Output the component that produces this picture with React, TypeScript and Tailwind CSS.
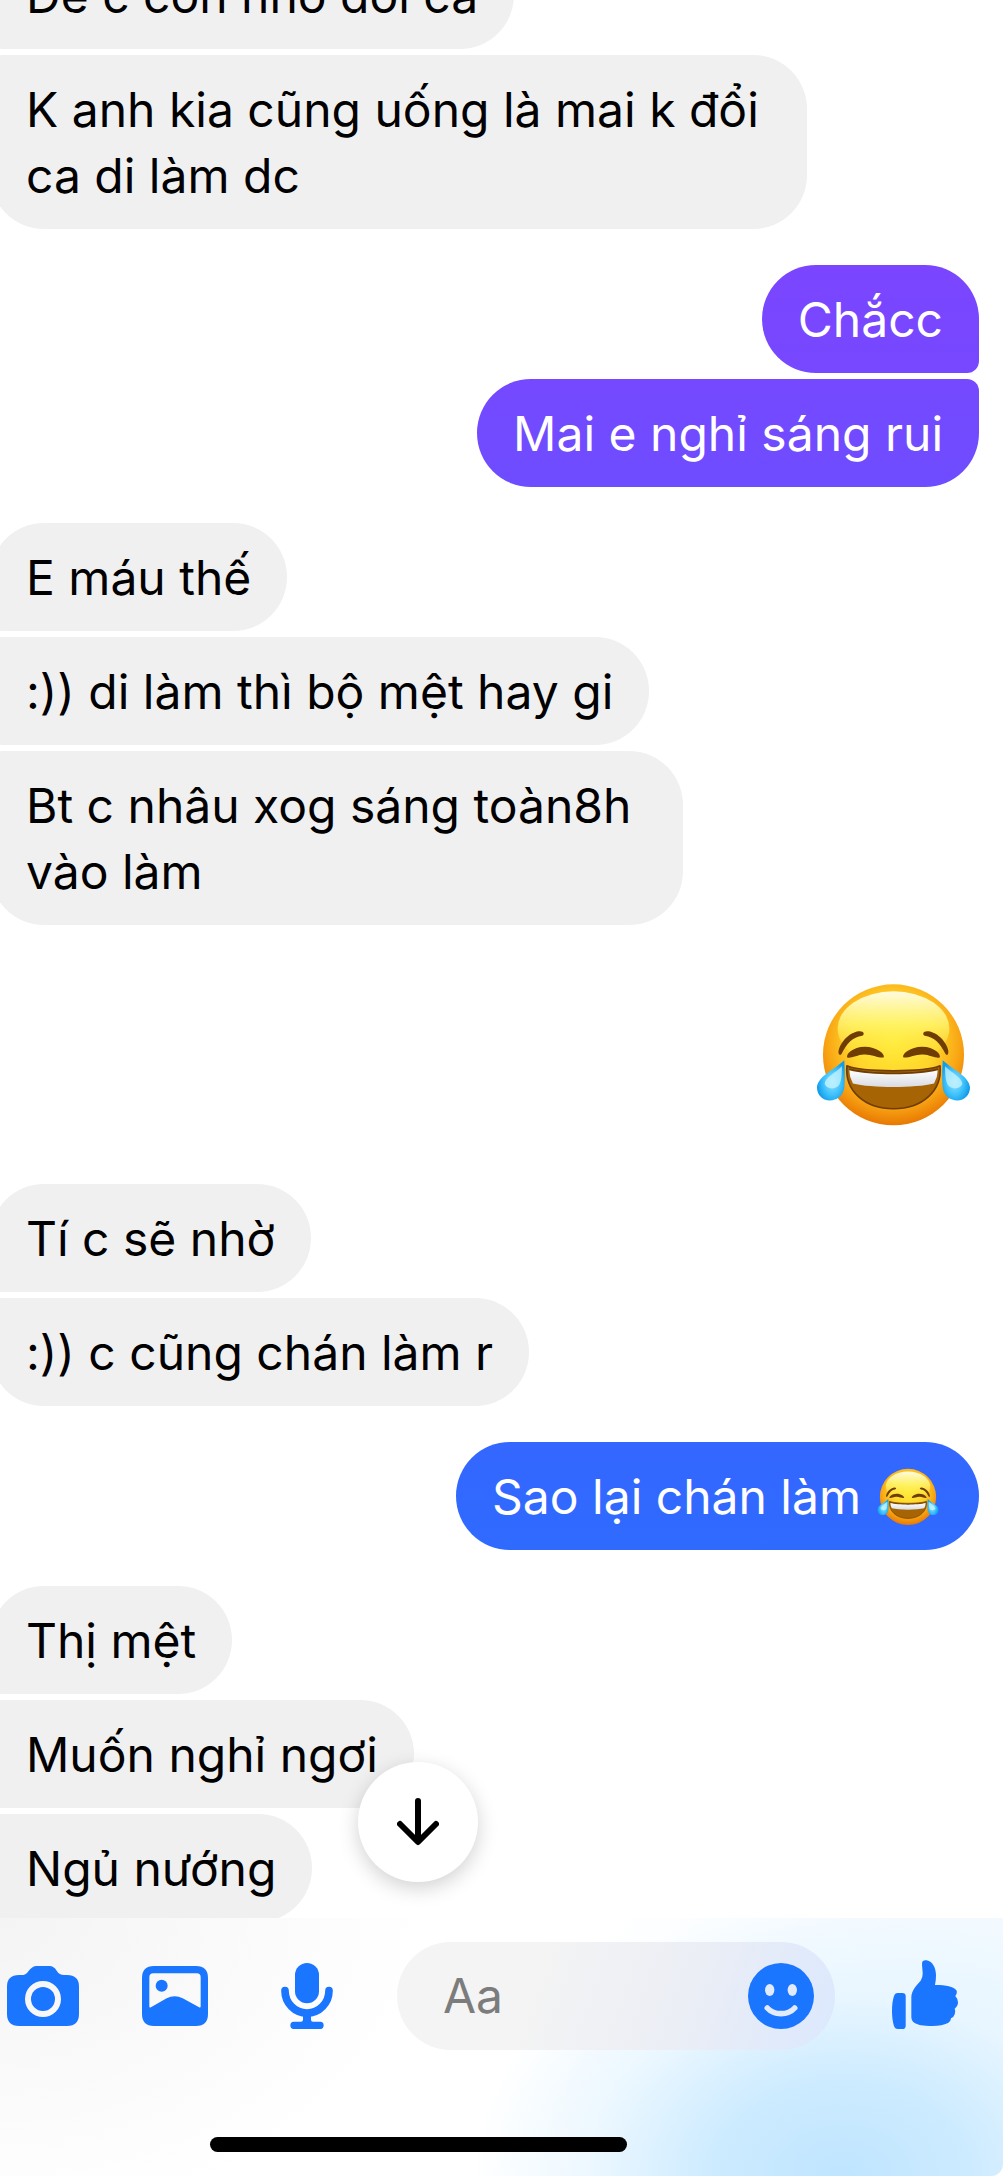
import { ReactNode, useId } from 'react';

type Position = 'single' | 'first' | 'middle' | 'last';

interface BubbleProps {
  children: ReactNode;
  position?: Position;
  className?: string;
}

const receivedCorners: Record<Position, string> = {
  single: 'rounded-[54px]',
  first: 'rounded-[54px] rounded-bl-[12px]',
  middle: 'rounded-[54px] rounded-l-[12px]',
  last: 'rounded-[54px] rounded-tl-[12px]',
};

const sentCorners: Record<Position, string> = {
  single: 'rounded-[54px]',
  first: 'rounded-[54px] rounded-br-[12px]',
  middle: 'rounded-[54px] rounded-r-[12px]',
  last: 'rounded-[54px] rounded-tr-[12px]',
};

function Received({ children, position = 'single', className = '' }: BubbleProps) {
  return (
    <p className={`max-w-[817px] bg-[#f0f0f0] px-9 pt-[22px] pb-5 text-black ${receivedCorners[position]} ${className}`}>
      {children}
    </p>
  );
}

function Sent({ children, position = 'single', className = '' }: BubbleProps) {
  return (
    <p className={`max-w-[817px] pt-[22px] pb-5 pl-9 text-white ${sentCorners[position]} ${className}`}>
      {children}
    </p>
  );
}

function ReceivedGroup({ children }: { children: ReactNode }) {
  return <div className="-ml-[10px] flex flex-col items-start gap-[6px]">{children}</div>;
}

function SentGroup({ children }: { children: ReactNode }) {
  return <div className="mr-6 flex flex-col items-end gap-[6px]">{children}</div>;
}

function JoyEmoji({ className }: { className: string }) {
  const id = useId();
  const half = (
    <>
      <path
        d="M150 283C141 275 160 226 203 214C222 209 229 220 219 227C190 231 173 250 157 281Q154 286 150 283Z"
        fill="#6f3d03"
      />
      <path
        d="M174 292C169 284 190 260 227 260C262 260 287 281 284 291C276 297 245 281 224 283C204 284 186 295 174 292Z"
        fill="#6f3d03"
      />
      <path
        d="M165 300C167 335 167 360 165 384C160 410 141 421 122 421C98 421 83 403 83 382C85 348 133 330 165 300Z"
        fill={`url(#${id}tear)`}
      />
      <path d="M158 318C158 345 156 362 150 374C138 390 112 388 106 372C106 352 138 338 158 318Z" fill="#c9f4ff" opacity="0.75" />
    </>
  );
  return (
    <svg viewBox="80 66 466 437" className={className} role="img" aria-label="Face with tears of joy">
      <defs>
        <radialGradient id={`${id}face`} cx="0.5" cy="0.4" r="0.6">
          <stop offset="0" stopColor="#ffea36" />
          <stop offset="0.5" stopColor="#ffd42a" />
          <stop offset="0.78" stopColor="#f9a614" />
          <stop offset="1" stopColor="#e87803" />
        </radialGradient>
        <linearGradient id={`${id}shine`} x1="0" y1="0" x2="0" y2="1">
          <stop offset="0" stopColor="#fffbe0" />
          <stop offset="0.45" stopColor="#fff76e" stopOpacity="0.8" />
          <stop offset="1" stopColor="#ffe52e" stopOpacity="0" />
        </linearGradient>
        <linearGradient id={`${id}teeth`} x1="0" y1="0" x2="0" y2="1">
          <stop offset="0" stopColor="#ffffff" />
          <stop offset="1" stopColor="#d9dbe2" />
        </linearGradient>
        <radialGradient id={`${id}tear`} cx="0.55" cy="0.55" r="0.55">
          <stop offset="0" stopColor="#8fe4ff" />
          <stop offset="0.6" stopColor="#3dc0fb" />
          <stop offset="1" stopColor="#129bea" />
        </radialGradient>
      </defs>
      <circle cx="313" cy="284" r="212" fill={`url(#${id}face)`} />
      <ellipse cx="313" cy="205" rx="168" ry="112" fill={`url(#${id}shine)`} />
      <path
        d="M173 317C220 337 405 337 453 317C460 392 400 446 313 446C226 446 166 392 173 317Z"
        fill="#a66404"
        stroke="#6f3d03"
        strokeWidth="5"
        strokeLinejoin="round"
      />
      <path
        d="M179 324C240 341 385 341 447 324L446 334C385 348 240 348 180 334Z"
        fill="#6f3d03"
      />
      <path
        d="M180 330C240 346 386 346 446 330Q446 350 435 370C380 384 246 384 191 370Q180 350 180 330Z"
        fill={`url(#${id}teeth)`}
      />
      <g>{half}</g>
      <g transform="translate(626 0) scale(-1 1)">{half}</g>
    </svg>
  );
}

function CameraIcon() {
  return (
    <svg viewBox="0 0 216 180" className="h-[60px] w-[72px]" fill="currentColor">
      <path
        fillRule="evenodd"
        d="M36 180Q0 180 0 144V62Q0 27 36 27H44Q56 27 63 17Q75 0 89 0H128Q140 0 149 14Q157 27 171 27H180Q216 27 216 62V144Q216 180 180 180ZM108 45A54 54 0 1 0 108 153A54 54 0 1 0 108 45Z"
      />
      <circle cx="108" cy="99" r="36" />
    </svg>
  );
}

function GalleryIcon() {
  return (
    <svg viewBox="0 0 198 180" className="h-[60px] w-[66px]" fill="currentColor">
      <path
        fillRule="evenodd"
        d="M36 0H162Q198 0 198 36V144Q198 180 162 180H36Q0 180 0 144V36Q0 0 36 0ZM22 34V121Q22 127 28 123L74 97Q98 84 122 97L170 123Q176 127 176 121V34Q176 22 164 22H34Q22 22 22 34Z"
      />
      <circle cx="59" cy="59" r="18" />
    </svg>
  );
}

function MicIcon() {
  return (
    <svg viewBox="0 0 156 198" className="h-[66px] w-[52px]" fill="currentColor">
      <rect x="42" y="0" width="72" height="121" rx="36" />
      <path d="M12 83A66 67 0 0 0 144 83" fill="none" stroke="currentColor" strokeWidth="23" strokeLinecap="round" />
      <path d="M66 150H90V170Q90 176 96 176H118Q128 176 128 187T118 198H38Q28 198 28 187T38 176H60Q66 176 66 170Z" />
    </svg>
  );
}

function SmileIcon() {
  return (
    <svg viewBox="0 0 66 66" className="size-[66px]">
      <circle cx="33" cy="33" r="33" fill="currentColor" />
      <ellipse cx="21.7" cy="27" rx="4.7" ry="6" fill="#e2ebfb" />
      <ellipse cx="44.3" cy="27" rx="4.7" ry="6" fill="#e2ebfb" />
      <path d="M19.3 45C26 52.5 40 52.5 46.7 45" fill="none" stroke="#e2ebfb" strokeWidth="5.6" strokeLinecap="round" />
    </svg>
  );
}

function ThumbIcon() {
  return (
    <svg viewBox="0 0 198 207" className="h-[69px] w-[66px]" fill="currentColor">
      <path d="M17 99H31Q41 99 41 109V197Q41 207 31 207H17Q9 207 6 198Q0 180 0 153T6 108Q9 99 17 99Z" />
      <path d="M58 112C58 90 76 74 86 62Q93 52 92 38C91 24 89 12 91 5Q94 -1 104 1C122 4 132 24 132 46Q132 62 129 75H142C172 76 190 84 194 92Q196 101 190 108Q198 117 198 127Q198 139 188 146Q191 153 188 163Q186 171 177 175Q177 184 168 189Q150 198 122 198C92 198 76 194 67 188Q58 182 58 170Z" />
    </svg>
  );
}

function Composer() {
  return (
    <footer className="relative -mt-1 flex-1 rounded-br-[12px] bg-white bg-[radial-gradient(ellipse_370px_270px_at_84%_100%,#bfe5ff_0%,#cdebff_35%,#e8f6ffcc_68%,#ffffff00_100%),radial-gradient(ellipse_420px_320px_at_96%_70%,#e4f4ff_0%,#ffffff00_100%),radial-gradient(ellipse_420px_300px_at_0%_0%,#f5f4f4_0%,#ffffff00_100%)] pt-6 pb-6">
      <div className="flex items-center pr-[45px] pl-[7px] text-[#1a75ff]">
        <div className="flex gap-[60px]">
          <button aria-label="Camera" className="flex h-[72px] w-[72px] items-center justify-center">
            <CameraIcon />
          </button>
          <button aria-label="Gallery" className="flex h-[72px] w-[72px] items-center justify-center">
            <GalleryIcon />
          </button>
          <button aria-label="Voice message" className="flex h-[72px] w-[72px] items-center justify-center">
            <MicIcon />
          </button>
        </div>
        <div className="mr-[57px] ml-[54px] flex h-[108px] min-w-0 flex-1 items-center rounded-[54px] bg-linear-[110deg,#f4f4f4_30%,#ebeef5_65%,#dbe8fe] pr-[21px] pl-[46px]">
          <input
            aria-label="Message"
            placeholder="Aa"
            className="min-w-0 flex-1 bg-transparent text-black outline-none placeholder:text-[#7c7c7c]"
          />
          <button aria-label="Emoji">
            <SmileIcon />
          </button>
        </div>
        <button aria-label="Like" className="pb-1">
          <ThumbIcon />
        </button>
      </div>
      <div className="mt-[87px] ml-[210px] h-[15px] w-[417px] rounded-full bg-black" />
    </footer>
  );
}

export default function App() {
  return (
    <div className="flex min-h-screen flex-col bg-white font-['Inter','Noto_Sans',sans-serif] text-[48px] leading-[66px]">
      <main className="relative overflow-hidden">
        <div className="-mt-[59px] flex flex-col gap-9">
          <ReceivedGroup>
            <Received position="middle">Để c còn nhờ đổi ca</Received>
            <Received position="last">K anh kia cũng uống là mai k đổi ca di làm dc</Received>
          </ReceivedGroup>

          <SentGroup>
            <Sent position="first" className="bg-linear-to-b from-[#7b45ff] to-[#7648ff] pr-9">Chắcc</Sent>
            <Sent position="last" className="bg-linear-to-b from-[#7549ff] to-[#6e4cff] pr-9">Mai e nghỉ sáng rui</Sent>
          </SentGroup>

          <ReceivedGroup>
            <Received position="first">E máu thế</Received>
            <Received position="middle">:)) di làm thì bộ mệt hay gi</Received>
            <Received position="last" className="min-w-[693px]">
              Bt c nhâu xog sáng toàn8h
              <br />
              vào làm
            </Received>
          </ReceivedGroup>

          <SentGroup>
            <div className="flex h-[187px] items-center pr-2">
              <JoyEmoji className="h-[146px] w-[155px]" />
            </div>
          </SentGroup>

          <ReceivedGroup>
            <Received position="first">Tí c sẽ nhờ</Received>
            <Received position="last">:)) c cũng chán làm r</Received>
          </ReceivedGroup>

          <SentGroup>
            <Sent className="flex items-center gap-4 bg-linear-to-b from-[#3467ff] to-[#2f6aff] pr-10">
              Sao lại chán làm
              <JoyEmoji className="h-[58px] w-[62px]" />
            </Sent>
          </SentGroup>

          <ReceivedGroup>
            <Received position="first">Thị mệt</Received>
            <Received position="middle">Muốn nghỉ ngơi</Received>
            <Received position="middle">Ngủ nướng</Received>
          </ReceivedGroup>
        </div>

        <button
          aria-label="Scroll to latest"
          className="absolute bottom-10 left-[358px] flex size-[120px] items-center justify-center rounded-full bg-white text-black shadow-[0_6px_20px_rgba(0,0,0,0.18)]"
        >
          <svg viewBox="0 0 42 48" className="h-12 w-[42px]" fill="none" stroke="currentColor" strokeWidth="6" strokeLinecap="round" strokeLinejoin="round">
            <path d="M21 3V43M3 26L21 44L39 26" />
          </svg>
        </button>
      </main>

      <Composer />
    </div>
  );
}
